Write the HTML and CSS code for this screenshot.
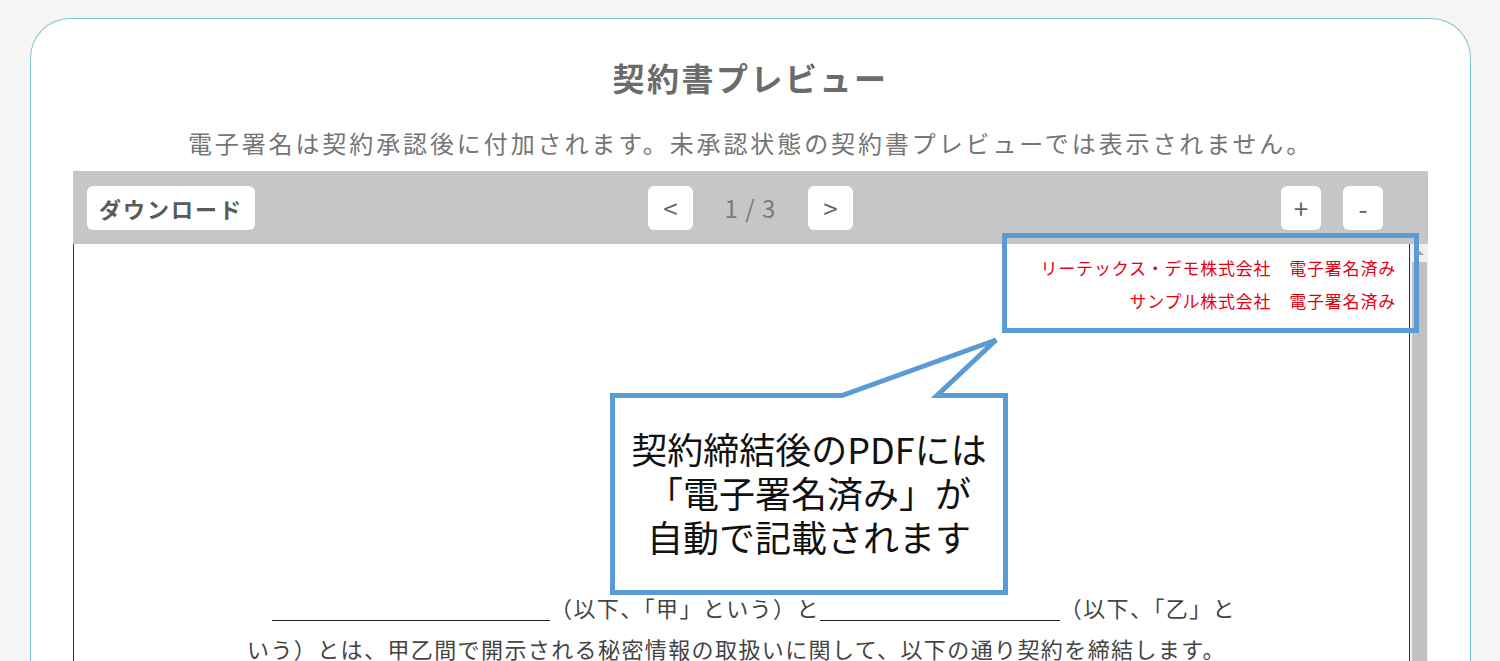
FILE: index.html
```html
<!DOCTYPE html>
<html lang="ja">
  <head>
    <meta charset="UTF-8" />
    <meta name="viewport" content="width=device-width, initial-scale=1.0" />
    <title>契約書プレビュー</title>
    <link rel="stylesheet" href="styles.css">
  </head>
  <body>
    <main class="card">
      <h1 class="title">契約書プレビュー</h1>
      <p class="lead">電子署名は契約承認後に付加されます。未承認状態の契約書プレビューでは表示されません。</p>

      <!-- PDF viewer -->
      <section class="viewer">
        <div class="toolbar">
          <div class="tool-left">
            <button class="btn btn-download">ダウンロード</button>
          </div>
          <div class="pager">
            <button class="btn btn-nav">&lt;</button>
            <span class="page-count">1 / 3</span>
            <button class="btn btn-nav">&gt;</button>
          </div>
          <div class="zoom">
            <button class="btn btn-zoom">+</button>
            <button class="btn btn-zoom">-</button>
          </div>
        </div>

        <div class="pane">
          <div class="sheet">
            <div class="stamps">
              <p>リーテックス・デモ株式会社　電子署名済み</p>
              <p>サンプル株式会社　電子署名済み</p>
            </div>
            <p class="clause">
              <span class="blank blank-long"></span>（以下、「甲」という）と<span class="blank blank-short"></span>（以下、「乙」と<br />いう）とは、甲乙間で開示される秘密情報の取扱いに関して、以下の通り契約を締結します。
            </p>
          </div>
          <div class="scrollbar">
            <span class="scroll-up"></span>
            <span class="scroll-thumb"></span>
          </div>
        </div>
      </section>

      <!-- annotation: highlight box + speech bubble -->
      <svg class="callout-lines" width="825" height="372" viewBox="0 0 825 372">
        <rect x="404.5" y="7.5" width="412" height="95" fill="none" stroke="#5b9bd5" stroke-width="5" />
        <path d="M12.5 167.5 H242 L396 112 L337 167.5 H405.5 V364.5 H12.5 Z" fill="#fff" stroke="#5b9bd5" stroke-width="5" />
      </svg>
      <div class="callout-text">
        <p>契約締結後のPDFには</p>
        <p>「電子署名済み」が</p>
        <p>自動で記載されます</p>
      </div>
    </main>
  </body>
</html>
```

FILE: styles.css
```css
body {
  margin: 0;
  padding: 0;
  height: 661px;
  overflow: hidden;
  background-color: #f5f5f5;
  font-family: "Noto Sans CJK JP", "Noto Sans", sans-serif;
}

.card {
  position: relative;
  margin: 18px 29px 0 30px;
  min-height: 700px;
  padding: 35px 42px 0;
  background: #fff;
  border: 1px solid #7fc6c8;
  border-bottom: none;
  border-radius: 40px 40px 0 0;
}

.title {
  margin: 0;
  font-size: 32px;
  line-height: 46px;
  font-weight: 700;
  letter-spacing: 2.5px;
  text-align: center;
  color: #6b6b6b;
}

.lead {
  margin: 25px 0 10px;
  font-size: 24px;
  line-height: 36px;
  letter-spacing: 2.9px;
  text-align: center;
  color: #757575;
}

/* toolbar */
.toolbar {
  display: grid;
  grid-template-columns: 1fr auto 1fr;
  align-items: center;
  height: 73px;
  padding: 0 14px;
  background-color: #c6c6c6;
}

.btn {
  height: 44px;
  border: none;
  border-radius: 6px;
  background: #fff;
  color: #5a5a5a;
  font-family: inherit;
  padding: 0;
  cursor: pointer;
}

.btn-download {
  padding: 0 12px;
  font-size: 22px;
  font-weight: 700;
  letter-spacing: 2px;
}

.pager {
  display: flex;
  align-items: center;
}

.btn-nav {
  width: 45px;
  font-size: 26px;
  color: #666;
}

.page-count {
  width: 53px;
  margin: 0 31px;
  font-size: 24px;
  color: #7a7a7a;
  text-align: center;
  letter-spacing: 1px;
}

.zoom {
  justify-self: end;
  display: flex;
  gap: 22px;
  margin-right: 31px;
}

.btn-zoom {
  width: 40px;
  font-size: 26px;
  color: #666;
}

/* document pane */
.pane {
  display: flex;
  height: 430px;
  background: #fff;
}

.sheet {
  flex: 1;
  padding: 7px 13px 0 0;
  border-left: 1px solid #333;
  border-right: 1px solid #333;
}

.stamps p {
  margin: 0;
  font-size: 17px;
  line-height: 33px;
  letter-spacing: 0.8px;
  text-align: right;
  color: #e50012;
}

.clause {
  margin: 270px 0 0 173px;
  font-size: 22px;
  line-height: 41px;
  letter-spacing: 1.4px;
  text-indent: 25px;
  white-space: nowrap;
  color: #444;
}

.blank {
  display: inline-block;
  height: 26px;
  border-bottom: 1.5px solid #222;
  vertical-align: -4px;
  text-indent: 0;
}

.blank-long {
  width: 278px;
}

.blank-short {
  width: 240px;
}

.scrollbar {
  display: flex;
  flex-direction: column;
  width: 18px;
  background: #f0f0f0;
}

.scroll-up {
  height: 18px;
  position: relative;
}

.scroll-up::after {
  content: "";
  position: absolute;
  left: 6px;
  top: 7px;
  border-left: 4px solid transparent;
  border-right: 4px solid transparent;
  border-bottom: 4px solid #a3a3a3;
}

.scroll-thumb {
  flex: 1;
  margin: 0 1px 0 2px;
  background: #c1c1c1;
}

/* annotation overlay */
.callout-lines {
  position: absolute;
  left: 569px;
  top: 209px;
}

.callout-text {
  position: absolute;
  left: 584px;
  top: 377px;
  width: 388px;
  height: 192px;
  display: flex;
  flex-direction: column;
  justify-content: center;
  text-align: center;
  color: #111;
}

.callout-text p {
  margin: 0;
  font-size: 36px;
  line-height: 44px;
}
```
